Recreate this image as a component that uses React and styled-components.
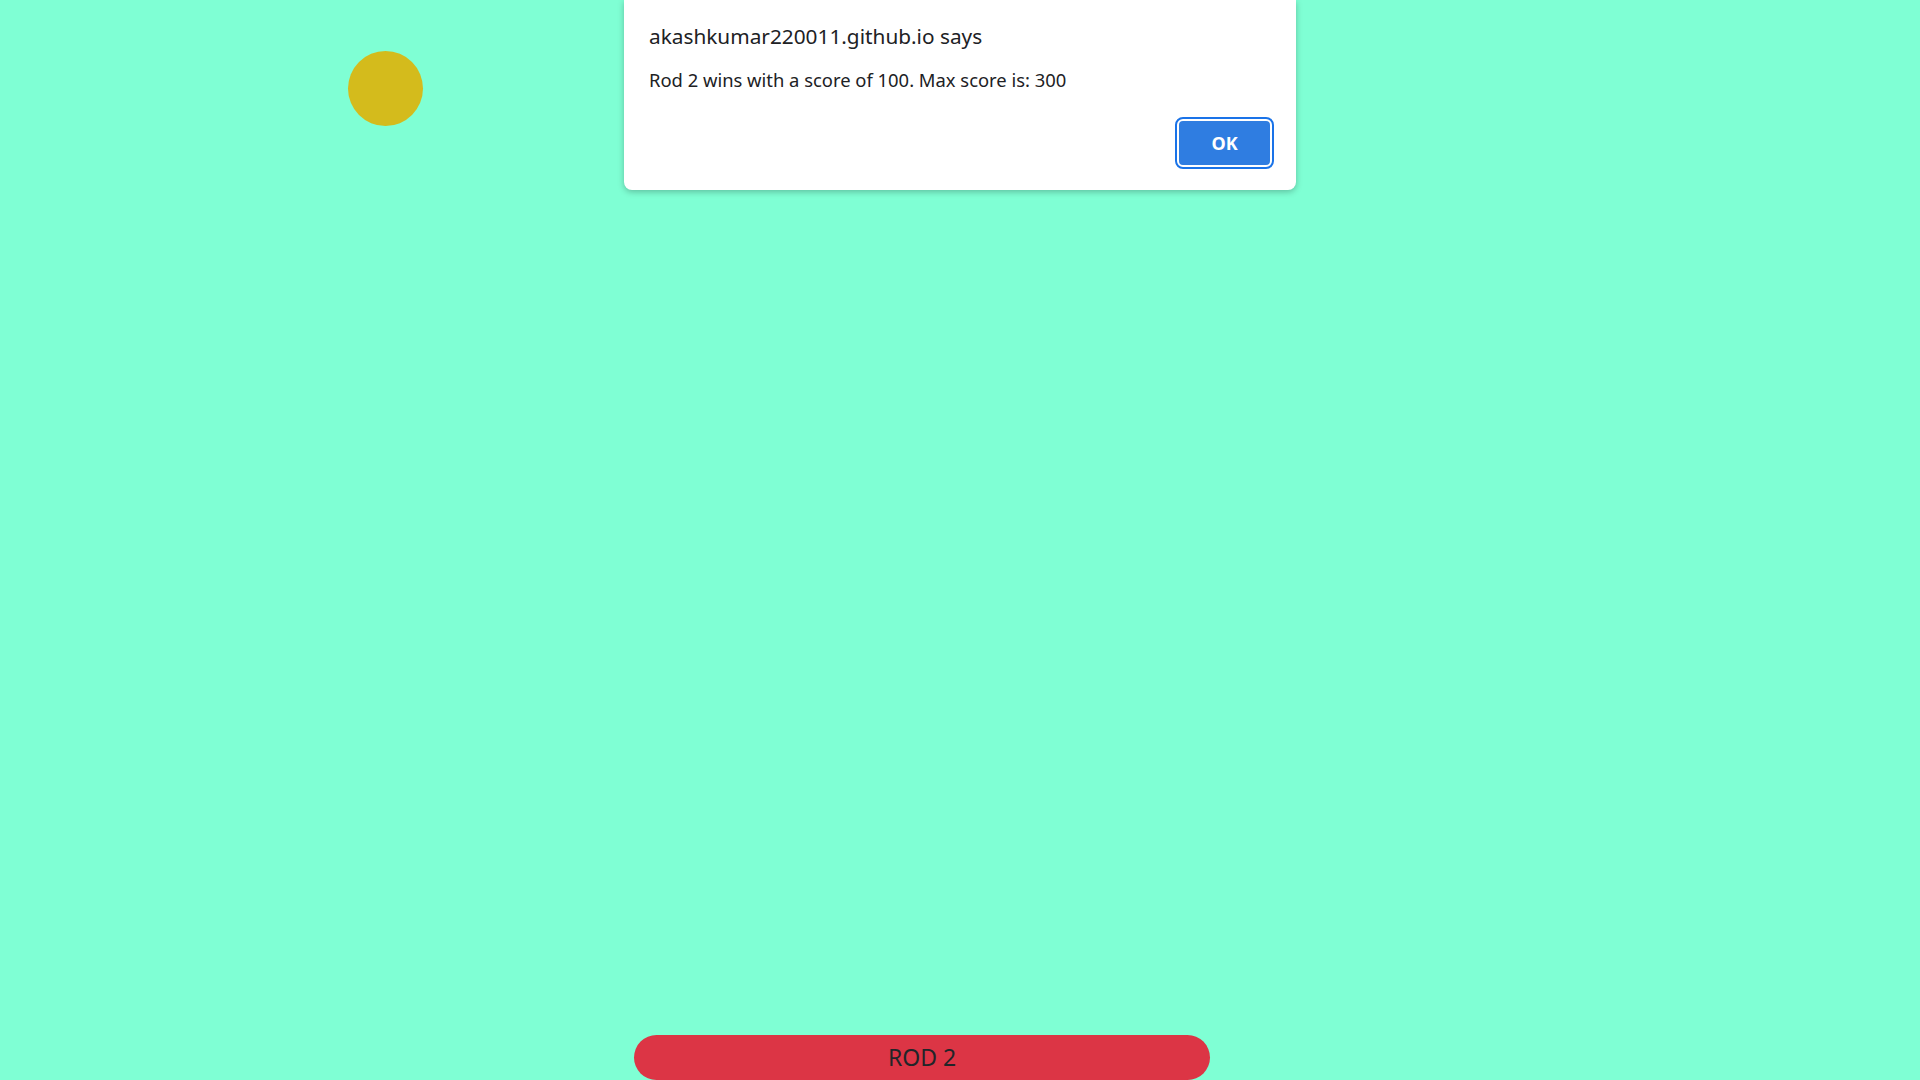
import React from "react";
import styled, { createGlobalStyle } from "styled-components";

const GlobalStyle = createGlobalStyle`
  html, body {
    margin: 0;
    padding: 0;
    background: #7fffd4;
    font-family: "Noto Sans", "Open Sans", sans-serif;
  }
`;

function App() {
  return (
    <Page>
      <GlobalStyle />
      <Ball />
      <Rod>ROD 2</Rod>
      <Alert>
        <AlertTitle>akashkumar220011.github.io says</AlertTitle>
        <AlertMessage>Rod 2 wins with a score of 100. Max score is: 300</AlertMessage>
        <AlertActions>
          <OkButton>OK</OkButton>
        </AlertActions>
      </Alert>
    </Page>
  );
}

const Page = styled.div`
  position: relative;
  height: 100vh;
  overflow: hidden;
  display: flex;
  flex-direction: column;
`;

const Ball = styled.div`
  position: absolute;
  left: 348px;
  top: 51px;
  width: 75px;
  height: 75px;
  border-radius: 50%;
  background: #d4bb1c;
`;

const Rod = styled.div`
  margin-top: auto;
  margin-left: 634px;
  width: 576px;
  height: 45px;
  padding-bottom: 1px;
  box-sizing: border-box;
  border-radius: 23px;
  background: #dc3545;
  color: #212529;
  font-size: 23px;
  display: flex;
  align-items: center;
  justify-content: center;
`;

const Alert = styled.div`
  position: absolute;
  top: 0;
  left: 624px;
  width: 672px;
  height: 190px;
  box-sizing: border-box;
  background: #fff;
  border-radius: 0 0 8px 8px;
  box-shadow: 0 2px 6px rgba(0, 0, 0, 0.25);
  padding: 22px 24px 23px 25px;
  display: flex;
  flex-direction: column;
  color: #202124;
`;

const AlertTitle = styled.div`
  font-size: 20.8px;
  line-height: 28px;
`;

const AlertMessage = styled.div`
  margin-top: 17px;
  font-size: 18.4px;
  line-height: 25px;
`;

const AlertActions = styled.div`
  margin-top: auto;
  display: flex;
  justify-content: flex-end;
`;

const OkButton = styled.button`
  width: 95px;
  height: 48px;
  border-radius: 6px;
  border: 2px solid #fff;
  outline: 2px solid #1a73e8;
  outline-offset: 0;
  background: #2f7de1;
  color: #fff;
  font-family: "Noto Sans", sans-serif;
  font-weight: 700;
  font-size: 18px;
`;

export default App;
